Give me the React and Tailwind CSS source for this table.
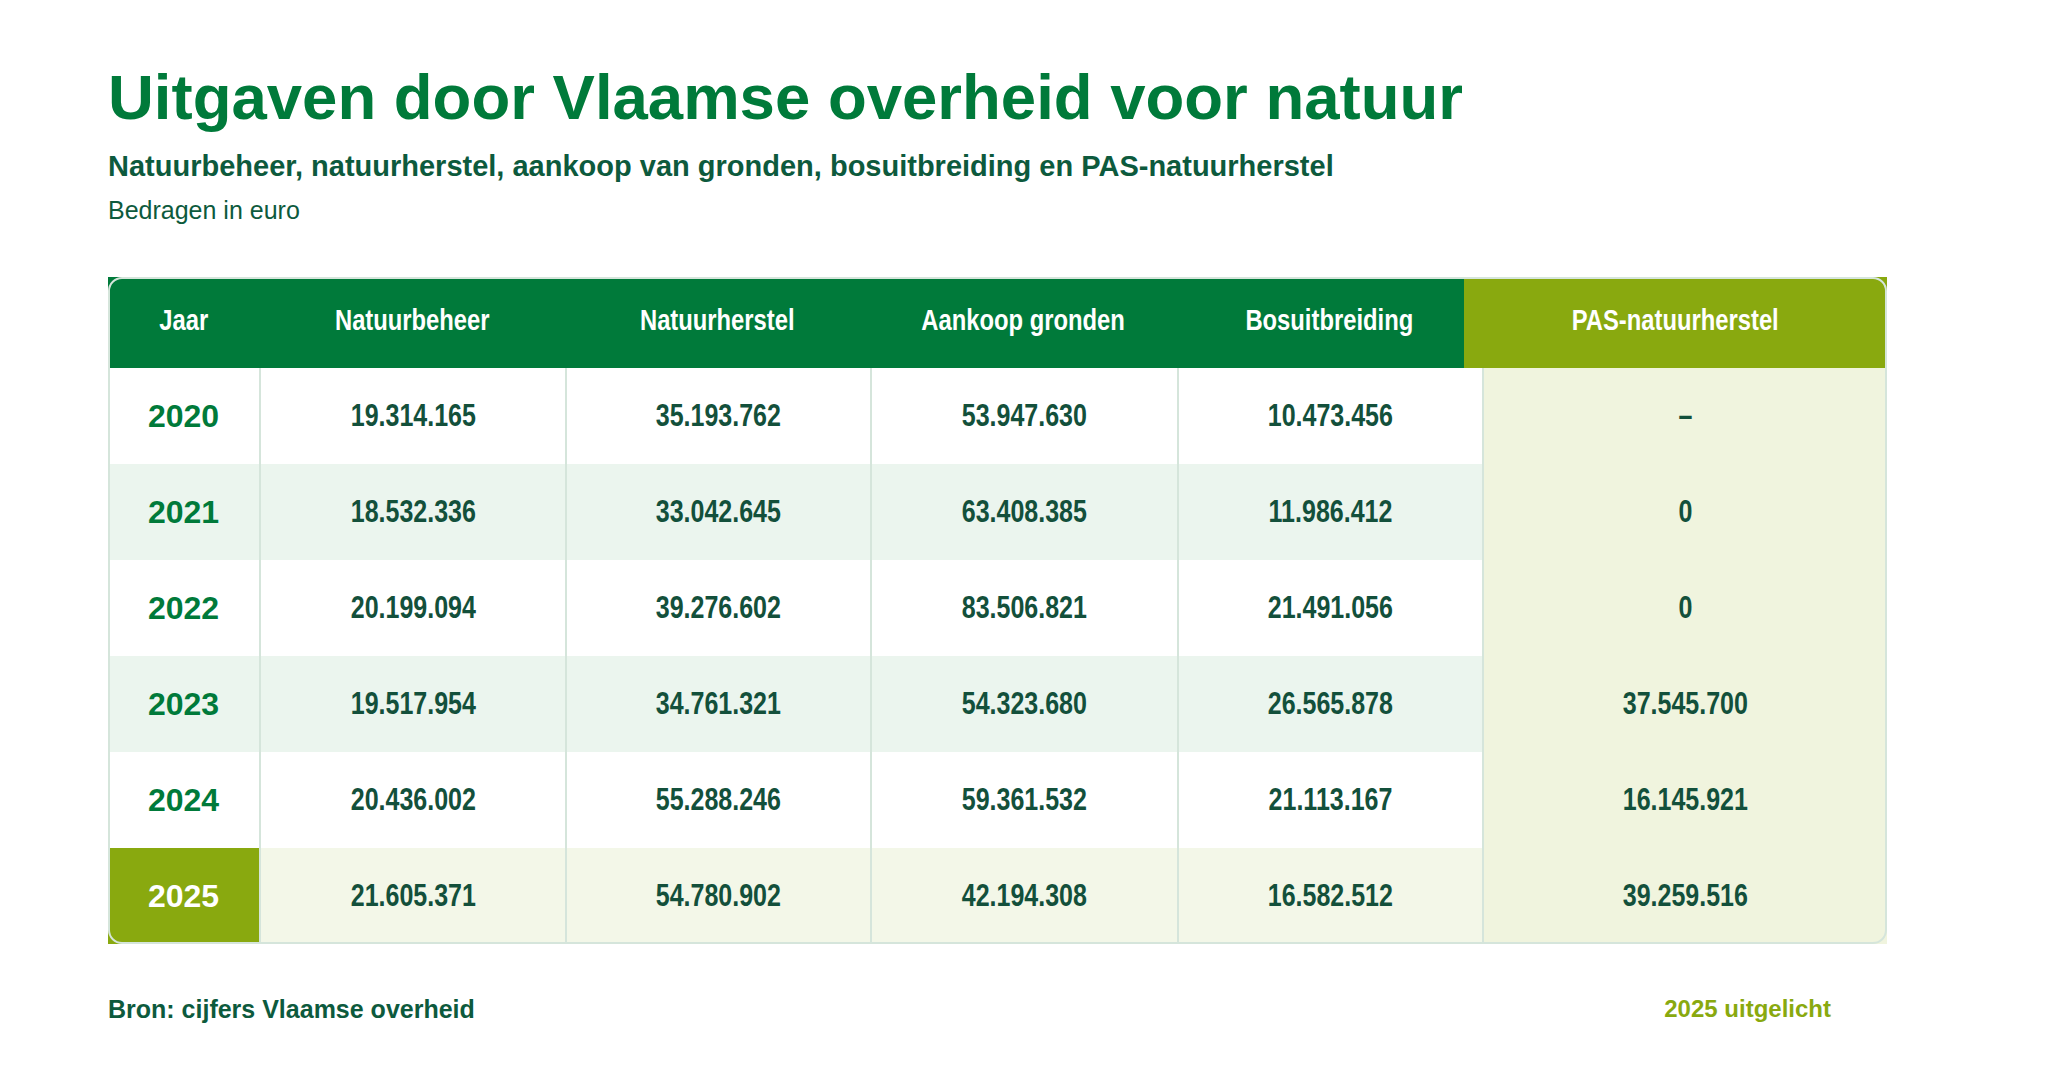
const headers = [
  { label: "Jaar" },
  { label: "Natuurbeheer" },
  { label: "Natuurherstel" },
  { label: "Aankoop gronden" },
  { label: "Bosuitbreiding" },
];

const rows = [
  { year: "2020", values: ["19.314.165", "35.193.762", "53.947.630", "10.473.456"], pas: "–" },
  { year: "2021", values: ["18.532.336", "33.042.645", "63.408.385", "11.986.412"], pas: "0" },
  { year: "2022", values: ["20.199.094", "39.276.602", "83.506.821", "21.491.056"], pas: "0" },
  { year: "2023", values: ["19.517.954", "34.761.321", "54.323.680", "26.565.878"], pas: "37.545.700" },
  { year: "2024", values: ["20.436.002", "55.288.246", "59.361.532", "21.113.167"], pas: "16.145.921" },
  { year: "2025", values: ["21.605.371", "54.780.902", "42.194.308", "16.582.512"], pas: "39.259.516", highlight: true },
];

const rowBg = (row, i) => {
  if (row.highlight) return "bg-[#f3f7e8]";
  return i % 2 === 1 ? "bg-[#ebf5ee]" : "bg-white";
};

// no narrow face installed, so squeeze the regular one
const Narrow = ({ children }) => (
  <span className="inline-block scale-x-[0.82] whitespace-nowrap">{children}</span>
);

export default function App() {
  return (
    <div className="min-h-screen bg-white font-['Liberation_Sans',Arial,sans-serif]">
      <div className="pl-[108px] pt-[66px]">
        <h1 className="text-[63.5px] leading-[63px] font-bold text-[#007a3a]">
          Uitgaven door Vlaamse overheid voor natuur
        </h1>
        <p className="mt-[20px] text-[29px] leading-[34px] font-bold text-[#0d5a3d]">
          Natuurbeheer, natuurherstel, aankoop van gronden, bosuitbreiding en PAS-natuurherstel
        </p>
        <p className="mt-[12px] text-[25px] leading-[30px] text-[#0d5a3d]">Bedragen in euro</p>

        <div className="relative mt-[52px] w-[1779px]">
          <div className="grid h-[91px] grid-cols-[151px_306px_305px_307px_305px_1fr] bg-[#007a3a] text-[29px] font-bold text-white">
            {headers.map((h) => (
              <div key={h.label} className="flex items-center justify-center pb-[4px]">
                <Narrow>{h.label}</Narrow>
              </div>
            ))}
            <div className="-ml-[18px] flex items-center justify-center bg-[#89a90f] pb-[4px]">
              <Narrow>PAS-natuurherstel</Narrow>
            </div>
          </div>

          {rows.map((row, i) => (
            <div
              key={row.year}
              className={`grid h-[96px] grid-cols-[151px_306px_305px_307px_305px_1fr] ${rowBg(row, i)}`}
            >
              <div
                className={`flex items-center justify-center text-[32px] font-bold ${
                  row.highlight ? "bg-[#89a90f] text-white" : "text-[#007a3a]"
                }`}
              >
                {row.year}
              </div>
              {row.values.map((v, j) => (
                <div
                  key={j}
                  className="flex items-center justify-center border-l-2 border-[#d5e5db] text-[30.5px] font-bold text-[#13503b]"
                >
                  <Narrow>{v}</Narrow>
                </div>
              ))}
              <div className="flex items-center justify-center border-l-2 border-[#d5e5db] bg-[#f0f4de] text-[30.5px] font-bold text-[#13503b]">
                <Narrow>{row.pas}</Narrow>
              </div>
            </div>
          ))}

          <div className="pointer-events-none absolute inset-0 rounded-[14px] border-2 border-[#d5e5db]" />
        </div>

        <div className="mt-[50px] flex w-[1779px] items-center justify-between pr-[56px] leading-[30px] font-bold">
          <span className="text-[25px] text-[#0d5a3d]">Bron: cijfers Vlaamse overheid</span>
          <span className="text-[24px] text-[#89a90f]">2025 uitgelicht</span>
        </div>
      </div>
    </div>
  );
}
